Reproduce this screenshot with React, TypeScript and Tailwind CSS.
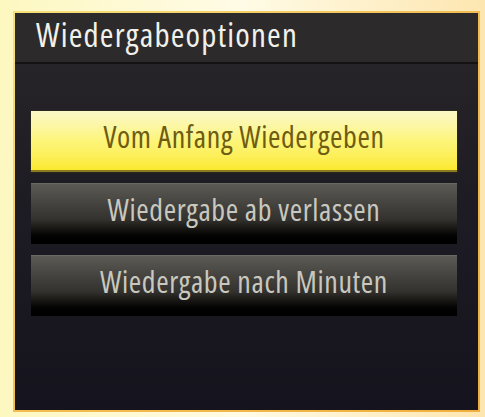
type Option = {
  label: string;
  active?: boolean;
};

const options: Option[] = [
  { label: "Vom Anfang Wiedergeben", active: true },
  { label: "Wiedergabe ab verlassen" },
  { label: "Wiedergabe nach Minuten" },
];

function OptionButton({ label, active }: Option) {
  if (active) {
    return (
      <div className="h-[61px] flex items-center justify-center bg-gradient-to-b from-[#fbf8c8] via-[#fdf57a] to-[#fbe92a] border-b-2 border-[#8a7a20] shadow-[0_0_0_1px_#2a2620]">
        <span className="text-[30px] -mt-[9px] tracking-[0.6px] text-[#6e5c12] font-['Open_Sans'] [font-stretch:condensed]">
          {label}
        </span>
      </div>
    );
  }
  return (
    <div className="h-[61px] flex items-center justify-center bg-gradient-to-b from-[#5b5a55] via-[#33312d] via-60% to-[#000000] border-t border-[#6a6862]">
      <span className="text-[30px] -mt-[10px] tracking-[0.6px] text-[#c9c8bf] font-['Open_Sans'] [font-stretch:condensed]">
        {label}
      </span>
    </div>
  );
}

export default function App() {
  return (
    <div className="w-[485px] h-[417px] bg-gradient-to-r from-[#fdf8c0] via-[#fffbe6] to-[#fde6b0] pt-[11px] pl-[13px] pr-[5px] pb-[5px]">
      <div className="h-full p-[2px] bg-gradient-to-br from-[#f7e27a] via-[#f2bd52] to-[#efb040]">
        <div className="h-full flex flex-col bg-[#16151f]">
          <div className="h-[51px] bg-[#2c2a2a] flex items-center pl-[21px] border-b-2 border-[#141212]">
            <h1 className="text-[33px] font-medium tracking-[1.2px] text-[#f1f1ec] leading-none -mt-[6px] font-['Open_Sans'] [font-stretch:condensed]">
              Wiedergabeoptionen
            </h1>
          </div>
          <div className="flex-1 bg-gradient-to-b from-[#262428] via-[#1c1a22] via-50% to-[#15141e] pt-[47px] pl-[16px] pr-[21px] flex flex-col gap-[11px]">
            {options.map((o) => (
              <OptionButton key={o.label} {...o} />
            ))}
          </div>
        </div>
      </div>
    </div>
  );
}
